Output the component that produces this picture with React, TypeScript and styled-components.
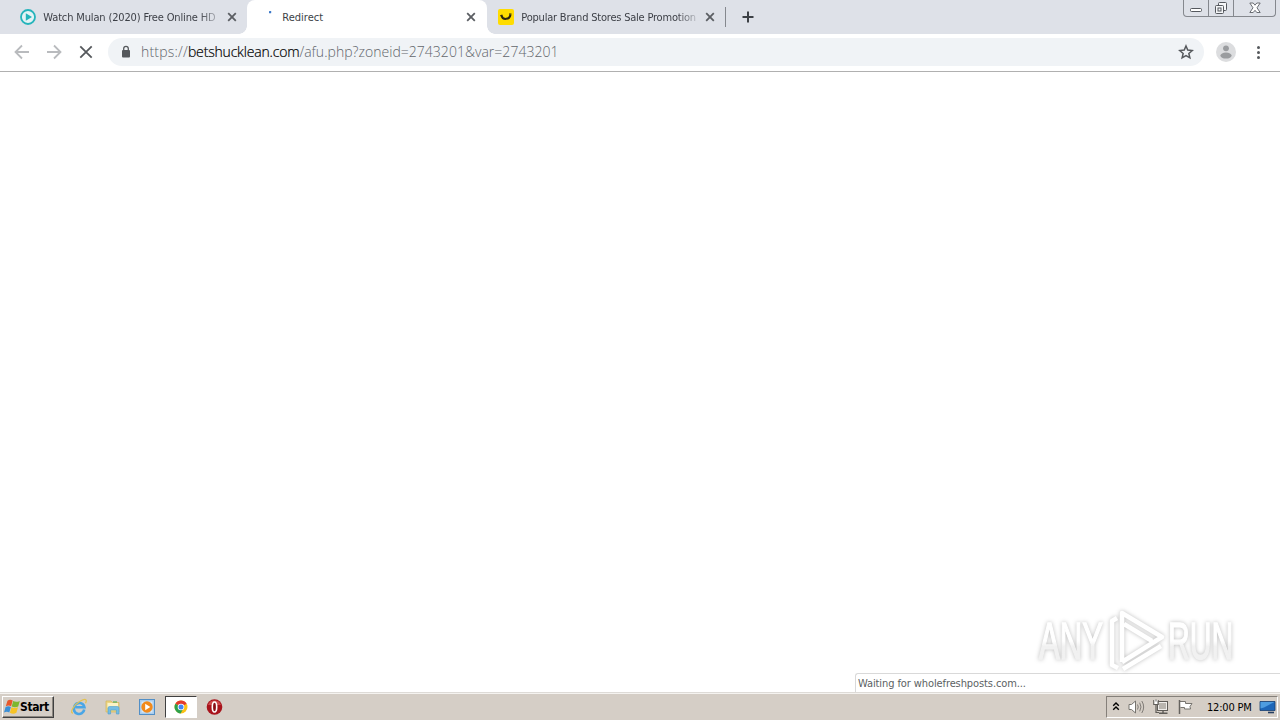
import React from 'react';
import styled, { createGlobalStyle } from 'styled-components';

const Colors = {
  Strip: '#dee1e8',
  Field: '#f0f3f6',
  Icon: '#55585c',
  IconDisabled: '#b9bbbe',
  Taskbar: '#d5cec6',
};

const GlobalStyle = createGlobalStyle`
  * { box-sizing: border-box; }
  body {
    margin: 0;
    overflow: hidden;
    background: #fff;
    font-family: 'DejaVu Sans Condensed', 'DejaVu Sans', sans-serif;
    font-stretch: condensed;
    font-size: 11px;
  }
  svg { display: block; flex: none; }
`;

const Screen = styled.div`
  position: relative;
  display: flex;
  flex-direction: column;
  width: 1280px;
  height: 720px;
`;

const TabStrip = styled.div`
  display: flex;
  height: 34px;
  padding-left: 8px;
  background: ${Colors.Strip};
`;

const TabItem = styled.div<{ active?: boolean; last?: boolean }>`
  position: relative;
  display: flex;
  align-items: center;
  width: ${({ active }) => (active ? 240 : 239)}px;
  height: 34px;
  padding: 0 ${({ active, last }) => (active || last ? 11 : 10)}px 0
    ${({ last }) => (last ? 11 : 12)}px;
  border-radius: 8px 8px 0 0;
  background: ${({ active }) => (active ? '#fff' : 'transparent')};

  ${({ active }) =>
    active &&
    `
    &::before, &::after {
      content: '';
      position: absolute;
      bottom: 0;
      width: 8px;
      height: 8px;
    }
    &::before {
      left: -8px;
      background: radial-gradient(circle at 0 0, transparent 7.5px, #fff 8px);
    }
    &::after {
      right: -8px;
      background: radial-gradient(circle at 100% 0, transparent 7.5px, #fff 8px);
    }
  `}
`;

const TabTitle = styled.div<{ spacing?: number; fade?: boolean }>`
  flex: 1;
  margin: 0 8px 0 7px;
  padding: 2px 0 0 0.3px;
  overflow: hidden;
  white-space: nowrap;
  line-height: 16px;
  color: #3c3f46;
  letter-spacing: ${({ spacing = 0 }) => spacing}px;
  mask-image: ${({ fade }) =>
    fade ? 'linear-gradient(to right, #000 calc(100% - 20px), rgba(0, 0, 0, 0.2))' : 'none'};
`;

const TabDivider = styled.div`
  width: 1px;
  height: 20px;
  margin: 7px 14px 0 -1px;
  background: #85888e;
`;

const NewTab = styled.div`
  display: flex;
  align-items: center;
`;

const WindowButtons = styled.div`
  display: flex;
  width: 93px;
  height: 17px;
  margin: 0 4px 0 auto;
  border: 1px solid #85888e;
  border-top: 0;
  border-radius: 0 0 4px 4px;
`;

const WindowButton = styled.div<{ wide?: boolean }>`
  display: flex;
  flex: ${({ wide }) => (wide ? '1' : '0 0 25px')};
  align-items: center;
  justify-content: center;
  border-right: ${({ wide }) => (wide ? '0' : '1px solid #85888e')};
`;

const Toolbar = styled.div`
  display: flex;
  align-items: center;
  height: 38px;
  padding: 0 14px 1px;
  border-bottom: 1px solid #b0b0b0;
`;

const NavButtons = styled.div`
  display: flex;
  gap: 16px;
  margin-right: 14px;
`;

const AddressBar = styled.div`
  display: flex;
  flex: none;
  align-items: center;
  width: 1096px;
  height: 28px;
  padding: 0 10px 0 13px;
  border-radius: 14px;
  background: ${Colors.Field};
`;

const Url = styled.div`
  flex: 1;
  margin-left: 10px;
  font-family: 'Open Sans', sans-serif;
  font-stretch: normal;
  font-weight: 300;
  font-size: 14px;
  line-height: 20px;
  letter-spacing: 0.03px;
  color: #62666b;
`;

const Scheme = styled.span`
  letter-spacing: 0.2px;
`;

const Host = styled.span`
  color: #000;
  letter-spacing: -0.18px;
  -webkit-text-stroke: 0.2px #000;
`;

const ToolbarEnd = styled.div`
  display: flex;
  align-items: center;
  gap: 14px;
  margin-left: 12px;
`;

const Page = styled.div`
  flex: 1;
  border-bottom: 1px solid #dedbd7;
`;

const StatusBubble = styled.div`
  position: absolute;
  right: 0;
  bottom: 28px;
  width: 425px;
  height: 19px;
  padding-left: 2px;
  border: 1px solid #d9d9d9;
  border-width: 1px 0 0 1px;
  border-radius: 3px 0 0 0;
  background: #fff;
  line-height: 20px;
  letter-spacing: -0.1px;
  color: #5c5f63;
`;

const Watermark = styled.svg`
  position: absolute;
  left: 1030px;
  top: 602px;
  filter: drop-shadow(0 0 2px rgba(0, 0, 0, 0.26));
`;

const Taskbar = styled.div`
  display: flex;
  align-items: center;
  height: 27px;
  padding: 0 2px;
  border-top: 1px solid #f5f3f0;
  background: ${Colors.Taskbar};
`;

const StartButton = styled.div`
  display: flex;
  align-items: center;
  width: 52px;
  height: 22px;
  padding-left: 1px;
  border: 1px solid;
  border-color: #fff #404040 #404040 #fff;
  box-shadow: inset -1px -1px #8c8780;
  color: #000;
  font-weight: 700;
  font-size: 12px;
  letter-spacing: -0.4px;
`;

const QuickLaunch = styled.div`
  display: flex;
  align-items: center;
  gap: 2px;
  margin-left: 9px;
`;

const TaskButton = styled.div<{ pressed?: boolean }>`
  display: flex;
  align-items: center;
  justify-content: center;
  width: 32px;
  height: 22px;
  border: ${({ pressed }) => (pressed ? '1px solid' : '0')};
  border-color: #404040 #fff #fff #404040;
  background: ${({ pressed }) => (pressed ? '#fff' : 'transparent')};
`;

const Tray = styled.div`
  display: flex;
  align-items: center;
  width: 172px;
  height: 22px;
  margin-left: auto;
  padding: 0 1px 0 5px;
  border: 1px solid;
  border-color: #85807a #fff #fff #85807a;
`;

const Clock = styled.div`
  width: 52px;
  margin-left: auto;
  white-space: nowrap;
  color: #000;
  letter-spacing: -0.2px;
`;

const TrayIcons = styled.div`
  display: flex;
  align-items: center;
  gap: 8px;
`;

const CloseIcon = () => (
  <svg width="10" height="10" viewBox="0 0 10 10">
    <path d="M1.2 1.2l7.6 7.6M8.8 1.2L1.2 8.8" stroke="#5b5e63" strokeWidth="1.8" />
  </svg>
);

const PlayFavicon = () => (
  <svg width="16" height="16" viewBox="0 0 16 16">
    <circle cx="8" cy="8" r="7" fill="#e4f3f5" stroke="#25b4bb" strokeWidth="1.8" />
    <path d="M5.8 4.3v7.4L12 8z" fill="#25b4bb" />
  </svg>
);

const LoadingFavicon = () => (
  <svg width="16" height="16" viewBox="0 0 16 16">
    <rect x="10" y="2" width="2.2" height="2.2" rx=".5" fill="#3c78c8" />
  </svg>
);

const SmileFavicon = () => (
  <svg width="16" height="16" viewBox="0 0 16 16">
    <rect width="16" height="16" rx="2" fill="#ffdc00" />
    <path d="M3.5 6.5c1 4.8 8.2 4.5 9-1" fill="none" stroke="#2b2410" strokeWidth="2" />
    <path d="M2.3 6.800l2.200-.8M11 5h2.500" stroke="#2b2410" strokeWidth="1.2" />
  </svg>
);

const PlusIcon = () => (
  <svg width="16" height="16" viewBox="0 0 16 16">
    <path d="M8 2.5v11M2.5 8h11" stroke="#3c4045" strokeWidth="2" />
  </svg>
);

const Arrow: React.FC<{ flip?: boolean }> = ({ flip }) => (
  <svg width="16" height="16" viewBox="0 0 16 16">
    <path
      d={flip ? 'M1 8h13M8 1.5L14.5 8 8 14.5' : 'M15 8H2M8 1.5L1.5 8 8 14.5'}
      fill="none"
      stroke={Colors.IconDisabled}
      strokeWidth="1.8"
    />
  </svg>
);

const StopIcon = () => (
  <svg width="16" height="16" viewBox="0 0 16 16">
    <path d="M2.3 2.3l11.4 11.4M13.7 2.3L2.3 13.7" stroke={Colors.Icon} strokeWidth="1.8" />
  </svg>
);

const LockIcon = () => (
  <svg width="10" height="14" viewBox="0 0 10 14">
    <rect x="1" y="5" width="8" height="7.5" rx="1" fill={Colors.Icon} />
    <path d="M2.7 5.5V3.6a2.3 2.3 0 014.6 0v1.9" fill="none" stroke={Colors.Icon} strokeWidth="1.3" />
  </svg>
);

const StarIcon = () => (
  <svg width="16" height="16" viewBox="0 0 16 16">
    <path
      d="M8 2l1.75 4.1 4.5.4-3.4 2.95 1 4.35L8 11.5l-3.85 2.3 1-4.35L1.75 6.5l4.5-.4z"
      fill="none"
      stroke={Colors.Icon}
      strokeWidth="1.5"
    />
  </svg>
);

const AvatarIcon = () => (
  <svg width="20" height="20" viewBox="0 0 20 20">
    <circle cx="10" cy="10" r="10" fill="#dcdddf" />
    <circle cx="10" cy="6.3" r="2.9" fill="#9a9c9f" />
    <ellipse cx="10" cy="13.6" rx="5.6" ry="3" fill="#9a9c9f" />
  </svg>
);

const MenuIcon = () => (
  <svg width="16" height="16" viewBox="0 0 16 16">
    <circle cx="8.5" cy="3.5" r="1.5" fill={Colors.Icon} />
    <circle cx="8.5" cy="8.5" r="1.5" fill={Colors.Icon} />
    <circle cx="8.5" cy="13.5" r="1.5" fill={Colors.Icon} />
  </svg>
);

const MinimizeGlyph = () => (
  <svg width="13" height="14" viewBox="0 0 13 14">
    <rect x=".5" y="7.5" width="11" height="3" rx="1" fill="#fff" stroke="#55585e" />
  </svg>
);

const RestoreGlyph = () => (
  <svg width="14" height="14" viewBox="0 0 14 14">
    <g fill="#f5f6f8" stroke="#55585e">
      <rect x="4.5" y="1.5" width="8" height="8" rx="1" />
      <rect x="1.5" y="4.5" width="8" height="8" rx="1" />
      <rect x="4" y="7" width="3" height="3" />
    </g>
  </svg>
);

const CloseGlyph = () => (
  <svg width="12" height="12" viewBox="0 0 12 12">
    <path
      d="M.8 1h3.4L6 3.2 7.8 1h3.4L8 5.8l3.2 4.7H7.8L6 8.3l-1.8 2.2H.8L4 5.8z"
      fill="#fff"
      stroke="#6a6d73"
    />
  </svg>
);

const WindowsFlag = () => (
  <svg width="16" height="16" viewBox="0 0 16 16">
    <path d="M3.5 1.7Q6 .1 8.7 1.6L7.1 7.2Q4.5 6 1.8 7.2z" fill="#e8582a" />
    <path d="M9.2 2q3 1.7 6.6-.1L14.2 7.5q-3.2 1.5-6.500 0z" fill="#7db72f" />
    <path d="M1.6 7.9q2.8-1.4 5.300 0L5.3 13.4q-2.5-1.5-5.300 0z" fill="#3b8fd6" />
    <path d="M7.5 8.2q3 1.6 6.500 0l-1.600 5.600q-3.200 1.700-6.500 0z" fill="#f7c325" />
  </svg>
);

const ExplorerIcon = () => (
  <svg width="18" height="18" viewBox="0 0 18 18">
    <path
      d="M14.2 11.500A5.200 5.200 0 114.400 8.500 5.200 5.200 0 0114.400 9.200H5.500"
      fill="none"
      stroke="#4aa6e6"
      strokeWidth="2.6"
    />
    <path d="M3 15C-.5 15.500 3 7 10 3.200c5.500-3 7.500-2 5.500 2" fill="none" stroke="#e3c252" strokeWidth="1.3" />
  </svg>
);

const FolderIcon = () => (
  <svg width="18" height="18" viewBox="0 0 18 18">
    <path d="M2 3h5l1.5 1.5H15V14H2z" fill="#ecd583" stroke="#d2b45a" strokeWidth=".7" />
    <path d="M3.5 5H14v5H3.5z" fill="#fbf3c6" />
    <path d="M9 4h4" stroke="#62b35f" strokeWidth="1.3" />
    <path d="M4 16V10q0-1.500 1.500-1.500h8Q15 8.500 15 10v6h-2.600v-4H6.600v4z" fill="#74bde4" stroke="#4f9fcb" strokeWidth=".6" />
  </svg>
);

const MediaIcon = () => (
  <svg width="18" height="18" viewBox="0 0 18 18">
    <rect x="1.5" y="1.5" width="15" height="15" fill="#a9cdee" stroke="#528fc6" />
    <rect x="3.5" y="3.5" width="11" height="11" fill="#d8e9f8" />
    <circle cx="9" cy="9" r="5.7" fill="#f18a1c" />
    <path d="M7.2 5.8v6.4L12.3 9z" fill="#fff" />
  </svg>
);

const ChromeIcon = () => (
  <svg width="16" height="16" viewBox="0 0 16 16">
    <circle cx="8" cy="8" r="6.5" fill="#fbc116" />
    <path d="M8 8L2.37 4.75A6.5 6.5 0 0113.63 4.75z" fill="#e33b2e" />
    <path d="M8 8L2.37 4.75A6.5 6.5 0 007.6 14.5l3-5.5z" fill="#2da14c" />
    <circle cx="8" cy="8" r="3.3" fill="#fff" />
    <circle cx="8" cy="8" r="2.5" fill="#4285f4" />
  </svg>
);

const OperaIcon = () => (
  <svg width="18" height="18" viewBox="0 0 18 18">
    <circle cx="8.5" cy="9" r="7.8" fill="#a8141c" />
    <path d="M2 7a7 7 0 0113 0z" fill="#cf4a4c" />
    <ellipse cx="8.5" cy="9" rx="2.2" ry="5" fill="#8a0d14" stroke="#fff" strokeWidth="1.6" />
  </svg>
);

const ChevronsIcon = () => (
  <svg width="8" height="10" viewBox="0 0 8 10">
    <path d="M1.2 3.700L4 1l2.800 2.700M1.200 7.700L4 5l2.800 2.700" fill="none" stroke="#000" strokeWidth="1.4" />
  </svg>
);

const SpeakerIcon = () => (
  <svg width="17" height="16" viewBox="0 0 17 16">
    <path d="M1 5.5h2.5L7.5 2v12l-4-3.500H1z" fill="#fff" stroke="#77746f" />
    <path d="M9.5 5.5q1.5 2.500 0 5M11.700 3.700q2.600 4.300 0 8.600M13.800 2q3.700 6 0 12" fill="none" stroke="#7f7b76" />
  </svg>
);

const NetworkIcon = () => (
  <svg width="16" height="16" viewBox="0 0 16 16">
    <rect x="4.5" y="2.5" width="10" height="9" fill="#b9b5af" stroke="#5f5c58" />
    <rect x="5.5" y="3.5" width="8" height="7" fill="none" stroke="#efedea" />
    <path d="M6 14.300h8.500M10 11.500v2.500" stroke="#5f5c58" strokeWidth="1.4" />
    <path d="M.8 1v4.500h4.400V1M3 5.500v8h3" fill="none" stroke="#5f5c58" strokeWidth="1.2" />
    <path d="M1.500 1h3v4h-3z" fill="#fff" />
    <path d="M3 .5v2" stroke="#5f5c58" />
  </svg>
);

const FlagIcon = () => (
  <svg width="17" height="16" viewBox="0 0 17 16">
    <path d="M2.5 2.5h6v2H15l-2 3 .5 2.500h-6V8.500H3.500" fill="#fff" stroke="#77746f" />
    <path d="M2.5 1v14" stroke="#66635f" strokeWidth="1.5" />
  </svg>
);

const DesktopIcon = () => (
  <svg width="17" height="16" viewBox="0 0 17 16">
    <path d="M1 2.5h15v9H1z" fill="#1d66b8" stroke="#173f70" strokeWidth=".8" />
    <path d="M1.5 3h14L5 8.500l-3.500 1z" fill="#4d9ce0" />
    <path d="M9 13.5h6" stroke="#263e60" strokeWidth="1.6" />
  </svg>
);

const AnyRunMark = () => (
  <Watermark width="220" height="78" viewBox="0 0 220 78">
    <defs>
      <linearGradient id="letters" x1="0" y1="0" x2="0" y2="1">
        <stop offset=".5" stopColor="#fff" />
        <stop offset=".6" stopColor="#f1f1f1" />
      </linearGradient>
    </defs>
    <g
      fill="url(#letters)"
      stroke="url(#letters)"
      strokeWidth="1.4"
      fontFamily="'Liberation Sans', sans-serif"
      fontSize="51"
    >
      <text transform="translate(9 56.5) scale(.61 1)">ANY</text>
      <text transform="translate(138 56.5) scale(.59 1)">RUN</text>
    </g>
    <g fill="none" stroke="#fff" strokeWidth="4.5" strokeLinejoin="round">
      <path d="M92 60V11l40 24-40 25M94 22l28 17" />
      <path d="M87 16l-5 3v44l6 3M93 67l38-23" />
    </g>
  </Watermark>
);

const App: React.FC = () => (
  <Screen>
    <GlobalStyle />
    <TabStrip>
      <TabItem>
        <PlayFavicon />
        <TabTitle fade spacing={-0.15}>
          Watch Mulan (2020) Free Online HD
        </TabTitle>
        <CloseIcon />
      </TabItem>
      <TabItem active>
        <LoadingFavicon />
        <TabTitle>Redirect</TabTitle>
        <CloseIcon />
      </TabItem>
      <TabItem last>
        <SmileFavicon />
        <TabTitle fade spacing={-0.21}>
          Popular Brand Stores Sale Promotion
        </TabTitle>
        <CloseIcon />
      </TabItem>
      <TabDivider />
      <NewTab>
        <PlusIcon />
      </NewTab>
      <WindowButtons>
        <WindowButton>
          <MinimizeGlyph />
        </WindowButton>
        <WindowButton>
          <RestoreGlyph />
        </WindowButton>
        <WindowButton wide>
          <CloseGlyph />
        </WindowButton>
      </WindowButtons>
    </TabStrip>
    <Toolbar>
      <NavButtons>
        <Arrow />
        <Arrow flip />
        <StopIcon />
      </NavButtons>
      <AddressBar>
        <LockIcon />
        <Url>
          <Scheme>https://</Scheme>
          <Host>betshucklean.com</Host>/afu.php?zoneid=2743201&amp;var=2743201
        </Url>
        <StarIcon />
      </AddressBar>
      <ToolbarEnd>
        <AvatarIcon />
        <MenuIcon />
      </ToolbarEnd>
    </Toolbar>
    <Page />
    <Taskbar>
      <StartButton>
        <WindowsFlag />
        Start
      </StartButton>
      <QuickLaunch>
        <TaskButton>
          <ExplorerIcon />
        </TaskButton>
        <TaskButton>
          <FolderIcon />
        </TaskButton>
        <TaskButton>
          <MediaIcon />
        </TaskButton>
        <TaskButton pressed>
          <ChromeIcon />
        </TaskButton>
        <TaskButton>
          <OperaIcon />
        </TaskButton>
      </QuickLaunch>
      <Tray>
        <TrayIcons>
          <ChevronsIcon />
          <SpeakerIcon />
          <NetworkIcon />
          <FlagIcon />
        </TrayIcons>
        <Clock>12:00 PM</Clock>
        <DesktopIcon />
      </Tray>
    </Taskbar>
    <StatusBubble>Waiting for wholefreshposts.com...</StatusBubble>
    <AnyRunMark />
  </Screen>
);

export default App;
